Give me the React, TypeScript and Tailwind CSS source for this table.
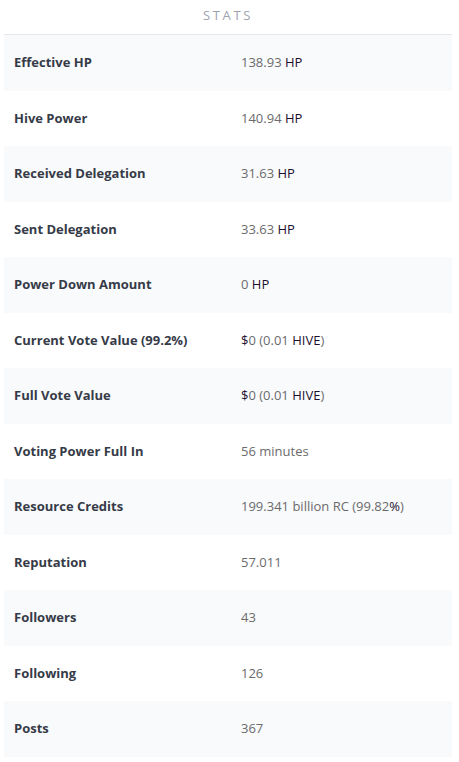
import React from "react";

type Part = { t: string; dark?: boolean };

const rows: { label: string; value: Part[] }[] = [
  { label: "Effective HP", value: [{ t: "138.93 " }, { t: "HP", dark: true }] },
  { label: "Hive Power", value: [{ t: "140.94 " }, { t: "HP", dark: true }] },
  { label: "Received Delegation", value: [{ t: "31.63 " }, { t: "HP", dark: true }] },
  { label: "Sent Delegation", value: [{ t: "33.63 " }, { t: "HP", dark: true }] },
  { label: "Power Down Amount", value: [{ t: "0 " }, { t: "HP", dark: true }] },
  {
    label: "Current Vote Value (99.2%)",
    value: [{ t: "$", dark: true }, { t: "0 (0.01 " }, { t: "HIVE", dark: true }, { t: ")" }],
  },
  {
    label: "Full Vote Value",
    value: [{ t: "$", dark: true }, { t: "0 (0.01 " }, { t: "HIVE", dark: true }, { t: ")" }],
  },
  { label: "Voting Power Full In", value: [{ t: "56 minutes" }] },
  {
    label: "Resource Credits",
    value: [{ t: "199.341 billion RC (99.82" }, { t: "%", dark: true }, { t: ")" }],
  },
  { label: "Reputation", value: [{ t: "57.011" }] },
  { label: "Followers", value: [{ t: "43" }] },
  { label: "Following", value: [{ t: "126" }] },
  { label: "Posts", value: [{ t: "367" }] },
];

export default function App() {
  return (
    <div className="w-[459px] h-[762px] bg-white font-['Open_Sans',sans-serif]">
      <div className="pl-1 pr-[7px]">
        <div className="h-[35px] flex items-start justify-center border-b border-[#e5e7eb] text-[13px] tracking-[0.2em] text-[#9ca3af] pt-[6px]">
          STATS
        </div>
        <div className="flex flex-col">
          {rows.map((r, i) => (
            <div
              key={r.label}
              className={`h-[55.5px] flex items-center text-[13px] ${i % 2 === 0 ? "bg-[#f9fafb]" : "bg-white"}`}
            >
              <div className="w-[237px] pl-[10px] font-bold text-[#363b48]">{r.label}</div>
              <div className="text-[#6b6b6b]">
                {r.value.map((p, j) => (
                  <span key={j} className={p.dark ? "text-[#1c0f2e]" : ""}>
                    {p.t}
                  </span>
                ))}
              </div>
            </div>
          ))}
        </div>
      </div>
    </div>
  );
}
